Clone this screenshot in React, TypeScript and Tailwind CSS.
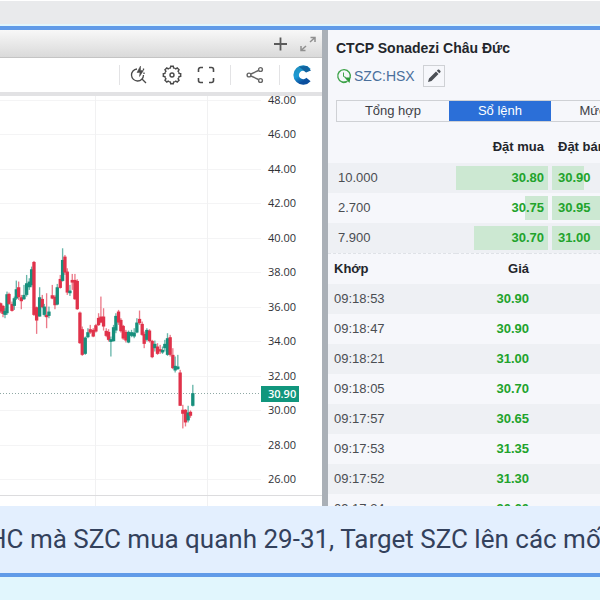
import { clsx } from 'clsx'

type Candle = [number, number, number, number, number, 'u' | 'd']

// x, high, low, body top, body bottom, direction
const candles: Candle[] = [
  [2, 308, 340, 310, 335, 'd'],
  [9, 315, 352, 318, 342, 'd'],
  [15, 325, 355, 333, 345, 'u'],
  [21, 275, 345, 283, 340, 'u'],
  [27, 278, 315, 282, 312, 'd'],
  [36, 305, 335, 312, 333, 'd'],
  [43, 290, 330, 295, 318, 'u'],
  [49, 242, 300, 268, 296, 'u'],
  [56, 245, 300, 262, 292, 'd'],
  [64, 285, 328, 292, 304, 'd'],
  [72, 255, 300, 285, 298, 'u'],
  [80, 225, 290, 250, 285, 'u'],
  [88, 235, 270, 245, 262, 'u'],
  [95, 200, 262, 208, 256, 'u'],
  [102, 183, 348, 186, 345, 'd'],
  [110, 320, 402, 322, 362, 'd'],
  [119, 262, 350, 292, 350, 'u'],
  [127, 285, 325, 297, 322, 'd'],
  [133, 312, 350, 320, 345, 'u'],
  [140, 280, 385, 345, 352, 'd'],
  [147, 320, 355, 335, 348, 'u'],
  [157, 255, 298, 286, 296, 'd'],
  [165, 285, 328, 290, 316, 'd'],
  [172, 252, 316, 262, 314, 'u'],
  [181, 225, 266, 237, 264, 'd'],
  [188, 145, 245, 180, 243, 'u'],
  [195, 165, 225, 170, 218, 'd'],
  [202, 205, 285, 215, 278, 'd'],
  [210, 255, 288, 272, 280, 'u'],
  [217, 222, 270, 240, 248, 'd'],
  [225, 222, 300, 240, 298, 'd'],
  [232, 238, 330, 243, 328, 'd'],
  [240, 335, 432, 338, 430, 'd'],
  [247, 380, 468, 388, 465, 'd'],
  [256, 410, 465, 413, 462, 'u'],
  [264, 385, 415, 397, 412, 'u'],
  [271, 375, 402, 388, 398, 'd'],
  [280, 385, 412, 390, 410, 'd'],
  [288, 372, 398, 376, 395, 'd'],
  [296, 340, 378, 354, 376, 'd'],
  [303, 290, 370, 350, 368, 'd'],
  [311, 325, 392, 350, 380, 'd'],
  [319, 385, 412, 393, 408, 'd'],
  [326, 388, 425, 396, 420, 'd'],
  [333, 410, 470, 418, 426, 'u'],
  [341, 375, 425, 382, 424, 'u'],
  [348, 340, 400, 348, 392, 'u'],
  [356, 330, 375, 335, 368, 'd'],
  [363, 355, 398, 360, 394, 'd'],
  [370, 375, 420, 378, 416, 'd'],
  [378, 390, 428, 396, 422, 'd'],
  [386, 392, 430, 396, 428, 'u'],
  [395, 390, 412, 397, 408, 'u'],
  [403, 385, 415, 398, 410, 'u'],
  [411, 355, 400, 368, 398, 'u'],
  [419, 332, 375, 357, 370, 'd'],
  [427, 365, 408, 372, 405, 'd'],
  [433, 395, 445, 402, 432, 'd'],
  [441, 385, 425, 390, 420, 'u'],
  [449, 388, 428, 392, 424, 'd'],
  [457, 420, 475, 423, 472, 'd'],
  [465, 422, 455, 432, 445, 'u'],
  [473, 430, 465, 440, 462, 'd'],
  [481, 435, 462, 448, 455, 'd'],
  [488, 440, 462, 450, 458, 'u'],
  [495, 420, 455, 432, 445, 'u'],
  [503, 400, 468, 415, 465, 'u'],
  [511, 405, 470, 412, 465, 'd'],
  [519, 445, 508, 465, 505, 'd'],
  [526, 470, 518, 498, 512, 'u'],
  [534, 465, 510, 500, 508, 'u'],
  [541, 510, 618, 518, 618, 'd'],
  [549, 615, 686, 630, 642, 'd'],
  [557, 628, 680, 630, 668, 'd'],
  [565, 618, 668, 638, 662, 'u'],
  [572, 632, 654, 636, 648, 'd'],
  [579, 555, 620, 580, 618, 'u'],
]

const prices = [48, 46, 44, 42, 40, 38, 36, 34, 32, 30, 28, 26]

const priceY = (price: number) => 4 + ((48 - price) * 379) / 22

const orders = [
  { volume: '10.000', bid: '30.80', bidSize: 100, ask: '30.90', askSize: 31 },
  { volume: '2.700', bid: '30.75', bidSize: 25, ask: '30.95', askSize: 100 },
  { volume: '7.900', bid: '30.70', bidSize: 80, ask: '31.00', askSize: 100 },
]

const trades = [
  { time: '09:18:53', price: '30.90' },
  { time: '09:18:47', price: '30.90' },
  { time: '09:18:21', price: '31.00' },
  { time: '09:18:05', price: '30.70' },
  { time: '09:17:57', price: '30.65' },
  { time: '09:17:53', price: '31.35' },
  { time: '09:17:52', price: '31.30' },
  { time: '09:17:34', price: '30.60' },
]

const IcPlus = () => (
  <svg className="h-4 w-4" viewBox="0 0 16 16" stroke="#5a5a5a" strokeWidth="1.8">
    <path d="M8.500 1.500v13M2 8h13" />
  </svg>
)

const IcExpand = () => (
  <svg className="h-4 w-4" viewBox="0 0 16 16" fill="none" stroke="#8f8f8f" strokeWidth="1.5">
    <path d="M10.500 1.500H15V6M15 1.500 10 6M5.500 14.500H1V10M1 14.500 6 10" />
  </svg>
)

const IcQuickSearch = () => (
  <svg className="h-5 w-5" viewBox="0 0 20 20" fill="none" stroke="#4a4a4a" strokeWidth="1.3">
    <path d="M9 4a6 6 0 1 0 6.500 6M14 14l4 4" />
    <path d="M12.500 1 9 7.500h3l-.500 4 4-6h-3z" fill="#4a4a4a" strokeWidth=".5" />
    <path d="M15.500 3.500V5M16 7.500v1.500" />
  </svg>
)

const teeth = [0, 45, 90, 135, 180, 225, 270, 315]

const IcGear = () => (
  <svg className="h-5 w-5" viewBox="0 0 20 20" fill="none" stroke="#4a4a4a" strokeWidth="1.4">
    {teeth.map((angle) => (
      <path
        key={angle}
        transform={`rotate(${angle} 10 10)`}
        d="M7.200 3.250 8.400 3 8.700 1.300h2.600L11.600 3l1.200.250"
      />
    ))}
    <circle cx="10" cy="10" r="2" />
  </svg>
)

const IcFullscreen = () => (
  <svg className="h-5 w-5" viewBox="0 0 20 20" fill="none" stroke="#4a4a4a" strokeWidth="1.6">
    <path d="M2.500 7V4.500a2 2 0 0 1 2-2H7M13 2.500h2.500a2 2 0 0 1 2 2V7M17.500 13v2.500a2 2 0 0 1-2 2H13M7 17.500H4.500a2 2 0 0 1-2-2V13" />
  </svg>
)

const IcShare = () => (
  <svg className="h-5 w-5" viewBox="0 0 20 20" fill="none" stroke="#666" strokeWidth="1.4">
    <circle cx="4" cy="10" r="1.900" />
    <circle cx="15.500" cy="4.500" r="1.900" />
    <circle cx="15.500" cy="15.500" r="1.900" />
    <path d="m6 9 7.500-3.500M6 11l7.500 3.500" />
  </svg>
)

const Logo = () => (
  <svg className="h-5 w-5" viewBox="0 0 20 20" fill="none">
    <defs>
      <linearGradient id="logo" x1="0" y1="0" x2=".5" y2="1">
        <stop offset="0" stopColor="#1f8fc0" />
        <stop offset=".5" stopColor="#1c9bd6" />
        <stop offset="1" stopColor="#0b4f9e" />
      </linearGradient>
    </defs>
    <path d="M16.500 5.500A7 7 0 1 0 16.500 14.500" stroke="url(#logo)" strokeWidth="5.5" />
    <path d="M7 1.500 15 1l4 4.500-5 2-3-2.500z" fill="#12639f" />
  </svg>
)

const IcClock = () => (
  <svg className="h-4 w-4" viewBox="0 0 16 16" fill="none" stroke="#3fa34a" strokeWidth="1.4">
    <path d="M11.500 13.200A6.300 6.300 0 1 1 14 10" />
    <path d="M6 14.200A6.300 6.300 0 0 0 10 14" />
    <path d="M7.500 4.500v4l2.500 1" strokeWidth="1" />
    <path d="M8.500 9.500h6l-1 5.500z" fill="#2e9a3a" stroke="none" />
  </svg>
)

const IcPencil = () => (
  <svg className="h-4 w-4" viewBox="0 0 16 16" fill="#4b4f55">
    <path d="m2 14 1-3.500 7-7 2.500 2.500-7 7zM10.800 2.800l1-1c.500-.500 1-.400 1.500 0l1 1c.400.500.500 1 0 1.500l-1 1z" />
  </svg>
)

const iconButton = 'flex h-6 w-6 items-center justify-center'

const PriceChart = () => (
  <svg
    className="h-[410px] w-full bg-white"
    viewBox="0 0 322 410"
    preserveAspectRatio="xMaxYMin slice"
    role="img"
    aria-label="SZC"
  >
    {prices.map((price) => (
      <path key={price} d={`M0 ${Math.round(priceY(price)) + 0.5}H261`} stroke="#f4f4f5" />
    ))}
    <path d="M95.500 0v410M207.500 0v410" stroke="#f1f1f2" />
    <path d="M0 399.500h322" stroke="#dcdcde" />
    <path d="M0 297.500h261" stroke="#8fa8a4" strokeDasharray="1 2" />

    <g transform="translate(0 104) scale(.333)">
      {candles.map(([x, high, low, top, bottom, dir]) => {
        const color = dir === 'u' ? '#178f7c' : '#e0324a'
        return (
          <g key={x} fill={color}>
            <rect x={x - 2} y={high} width="4" height={low - high} opacity=".65" />
            <rect x={x - 5} y={top} width="10" height={bottom - top} />
          </g>
        )
      })}
    </g>

    <g className="font-['Open_Sans',sans-serif] text-[11px] font-medium" fill="#2f3136">
      {prices.map((price) => (
        <text key={price} x="268" y={Math.round(priceY(price)) + 4}>
          {price.toFixed(2)}
        </text>
      ))}
      <rect x="261" y="290" width="38" height="16" fill="#11967d" />
      <text x="268" y="302" fill="#fff" className="font-semibold">
        30.90
      </text>
    </g>
  </svg>
)

const ChartPanel = () => (
  <section className="min-w-0 flex-1 bg-white">
    <div className="flex h-7 items-center justify-end gap-3 border-b border-[#c4c4c4] bg-linear-to-b from-[#f8f8f8] to-[#dadada] pr-1.5">
      <button aria-label="Thêm">
        <IcPlus />
      </button>
      <button aria-label="Mở rộng">
        <IcExpand />
      </button>
    </div>
    <div className="flex h-[38px] items-center justify-end border-b-4 border-[#e2e2e4] pr-2">
      <span className="mr-1.5 h-5 w-px bg-[#e3e3e5]" />
      <button className={iconButton} aria-label="Tìm nhanh">
        <IcQuickSearch />
      </button>
      <button className={clsx(iconButton, 'ml-2.5')} aria-label="Cài đặt">
        <IcGear />
      </button>
      <button className={clsx(iconButton, 'ml-2.5')} aria-label="Toàn màn hình">
        <IcFullscreen />
      </button>
      <span className="ml-3 h-5 w-px bg-[#e3e3e5]" />
      <button className={clsx(iconButton, 'ml-3')} aria-label="Chia sẻ">
        <IcShare />
      </button>
      <span className="ml-3 h-5 w-px bg-[#e3e3e5]" />
      <a href="#" className={clsx(iconButton, 'ml-2.5')} aria-label="Trang chủ">
        <Logo />
      </a>
    </div>
    <PriceChart />
  </section>
)

const OrderTable = () => (
  <table className="w-[328px] table-fixed border-collapse text-[13px]">
    <thead>
      <tr className="h-8 text-[#23262b]">
        <th className="w-32" />
        <th className="w-23 pr-1 text-right whitespace-nowrap">Đặt mua</th>
        <th className="pl-2.5 text-left">Đặt bán</th>
      </tr>
    </thead>
    <tbody>
      {orders.map((order) => (
        <tr key={order.volume} className="h-[30px] odd:bg-[#eef0f4]">
          <td className="pl-2.5 text-[#4a4d52]">{order.volume}</td>
          <td className="font-bold text-[#21a32b]">
            <div className="grid h-6 items-center">
              <div
                className="col-start-1 row-start-1 h-6 justify-self-end bg-[#cce8d2]"
                style={{ width: `${order.bidSize}%` }}
              />
              <span className="z-10 col-start-1 row-start-1 pr-1 text-right">{order.bid}</span>
            </div>
          </td>
          <td className="pl-1 font-bold text-[#21a32b]">
            <div className="grid h-6 items-center">
              <div
                className="col-start-1 row-start-1 h-6 bg-[#cce8d2]"
                style={{ width: `${order.askSize}%` }}
              />
              <span className="z-10 col-start-1 row-start-1 pl-1.5">{order.ask}</span>
            </div>
          </td>
        </tr>
      ))}
    </tbody>
  </table>
)

const TradeTable = () => (
  <table className="w-[328px] table-fixed border-collapse border-t border-dashed border-[#dfe2e7] text-[13px]">
    <thead>
      <tr className="h-[30px] text-[#23262b]">
        <th className="w-32 pl-1.5 text-left">Khớp</th>
        <th className="w-[73px] text-right">Giá</th>
        <th />
      </tr>
    </thead>
    <tbody>
      {trades.map((trade) => (
        <tr key={trade.time} className="h-[30px] odd:bg-[#eef0f4]">
          <td className="pl-1.5 text-[#4a4d52]">{trade.time}</td>
          <td className="text-right font-bold text-[#21a32b]">{trade.price}</td>
          <td />
        </tr>
      ))}
    </tbody>
  </table>
)

const QuotePanel = () => (
  <section className="h-[476px] w-[278px] shrink-0 overflow-hidden border-l-[6px] border-[#aab0b7] bg-[#f6f7fb] font-['Liberation_Sans',sans-serif]">
    <h1 className="px-2 pt-2 text-sm font-bold whitespace-nowrap text-[#23262b]">
      CTCP Sonadezi Châu Đức
    </h1>
    <div className="mt-1.5 flex h-6 items-center pl-2 text-sm">
      <IcClock />
      <a href="#" className="ml-0.5 text-[#4a6f9c]">
        SZC:HSX
      </a>
      <button
        className="ml-2 flex h-[22px] w-[22px] items-center justify-center border border-[#cfd1d5]"
        aria-label="Sửa"
      >
        <IcPencil />
      </button>
    </div>
    <div className="mt-3 ml-2 flex h-[22px] w-[320px] border border-[#cfd1d5] text-[13px] text-[#3d4046]">
      <button className="w-28">Tổng hợp</button>
      <button className="w-[102px] bg-[#2b6fd8] text-white">Sổ lệnh</button>
      <button className="flex-1">Mức giá</button>
    </div>
    <div className="mt-[9px]">
      <OrderTable />
      <TradeTable />
    </div>
  </section>
)

const App = () => (
  <div className="overflow-hidden bg-[#e1f6fd] pb-6">
    <div className="mb-0.5 h-6 border-t border-white bg-[#e9eaec]" />
    <main className="border-y-4 border-[#619be8]">
      <div className="flex">
        <ChartPanel />
        <QuotePanel />
      </div>
      <p className="-ml-3 h-[67px] bg-[#e3effe] font-[Roboto,sans-serif] text-[26px] leading-[66px] whitespace-nowrap text-[#33415c]">
        HC mà SZC mua quanh 29-31, Target SZC lên các mốc
      </p>
    </main>
  </div>
)

export default App
